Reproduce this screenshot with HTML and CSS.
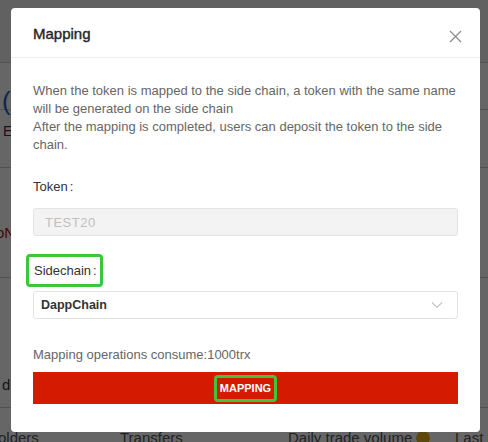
FILE: index.html
```html
<!DOCTYPE html>
<html>
<head>
<meta charset="utf-8">
<link rel="stylesheet" href="styles.css">
</head>
<body>
<div class="page">
  <div class="bg-row r1"></div>
  <div class="bg-row r2"><span class="bg-blue">(</span></div>
  <div class="bg-row r3"><span>E</span></div>
  <div class="bg-row r4"><span class="bg-red">oN</span></div>
  <div class="bg-row r5"><span>d</span></div>
  <div class="bg-tabs">
    <span class="t1">olders</span>
    <span class="t2">Transfers</span>
    <span class="t3">Daily trade volume <i class="coin"></i></span>
    <span class="t4">Last</span>
  </div>
</div>
<div class="overlay"></div>
<div class="modal">
  <div class="modal-head">
    <h2 class="modal-title">Mapping</h2>
    <svg class="close" width="13" height="13" viewBox="0 0 13 13"><path d="M1 1L12 12M12 1L1 12" stroke="#8c8c8c" stroke-width="1.3" fill="none"/></svg>
  </div>
  <div class="modal-body">
    <p class="desc">When the token is mapped to the side chain, a token with the same name will be generated on the side chain<br>After the mapping is completed, users can deposit the token to the side chain.</p>
    <div class="label">Token<span class="colon">:</span></div>
    <div class="input disabled">TEST20</div>
    <div class="label hl"><span class="hl-box">Sidechain<span class="colon">:</span></span></div>
    <div class="input select">
      <span class="sel-val">DappChain</span>
      <svg class="chev" width="12" height="8" viewBox="0 0 12 8"><path d="M1 1.5L6 6.5L11 1.5" stroke="#c4c4c4" stroke-width="1.2" fill="none"/></svg>
    </div>
    <div class="consume">Mapping operations consume:1000trx</div>
    <div class="btn"><span class="btn-text">MAPPING</span></div>
  </div>
</div>
</body>
</html>
```
FILE: styles.css
```css
html, body {
  margin: 0;
  padding: 0;
}
body {
  width: 488px;
  height: 442px;
  overflow: hidden;
  position: relative;
  font-family: "Liberation Sans", Arial, sans-serif;
  background: #fff;
}
.page {
  position: absolute;
  inset: 0;
  background: #fff;
}
.bg-row {
  position: absolute;
  left: 0;
  right: 0;
  border-bottom: 1px solid #ccc;
  font-size: 16px;
  color: #333;
}
.r1 { top: 0; height: 62px; background: #f3f3f3; }
.r2 { top: 62px; height: 48px; padding-top: 24px; box-sizing: border-box; }
.r3 { top: 110px; height: 58px; padding-top: 12px; box-sizing: border-box; }
.r4 { top: 168px; height: 110px; padding-top: 56px; box-sizing: border-box; }
.r5 { top: 278px; height: 130px; padding-top: 98px; box-sizing: border-box; }
.bg-blue { color: #2a5ad0; font-size: 26px; margin-left: 2px; }
.bg-red { color: #b01010; font-size: 15px; margin-left: -4px; }
.r3 span { margin-left: 3px; font-size: 14px; }
.r5 span { margin-left: 2px; font-size: 15px; }
.bg-tabs {
  position: absolute;
  left: 0;
  right: 0;
  top: 429px;
  font-size: 15px;
  color: #555;
}
.bg-tabs span { position: absolute; top: 0; white-space: nowrap; }
.t1 { left: -2px; }
.t2 { left: 120px; }
.t3 { left: 288px; }
.t4 { left: 455px; }
.coin {
  display: inline-block;
  width: 14px;
  height: 14px;
  border-radius: 50%;
  background: #e9b320;
  vertical-align: -2px;
}
.overlay {
  position: absolute;
  inset: 0;
  background: rgba(0, 0, 0, 0.6);
}
.modal {
  position: absolute;
  left: 11px;
  top: 8px;
  width: 469px;
  height: 424px;
  background: #fff;
  border-radius: 4px;
  box-sizing: border-box;
}
.modal-head {
  height: 49px;
  border-bottom: 1px solid #eeeeee;
  display: flex;
  align-items: center;
  justify-content: space-between;
  padding: 0 18px 0 22px;
}
.modal-title {
  margin: 0;
  font-size: 15px;
  font-weight: 400;
  -webkit-text-stroke: 0.4px #262626;
  color: #262626;
  padding-top: 1px;
}
.close { margin-top: 8px; }
.modal-body {
  padding: 24px 22px 0 22px;
}
.desc {
  margin: 0;
  font-size: 13px;
  line-height: 18px;
  color: #666;
}
.label {
  font-size: 13px;
  color: #333;
  margin-top: 24px;
  line-height: 18px;
}
.colon { margin-left: 2px; }
.input {
  margin-top: 12px;
  height: 28px;
  box-sizing: border-box;
  border: 1px solid #e3e3e3;
  border-radius: 3px;
  font-size: 13px;
  display: flex;
  align-items: center;
  padding: 0 11px;
}
.disabled {
  background: #f3f3f3;
  color: #c0c0c0;
  letter-spacing: 0.5px;
}
.label.hl { margin-top: 18px; }
.hl-box {
  display: inline-block;
  margin-left: -7px;
  padding: 6px 3px 6px 5px;
  border: 3px solid #3ec63a;
  border-radius: 4px;
  line-height: 15px;
}
.select {
  margin-top: 4px;
  padding: 0 14px 0 7px;
  justify-content: space-between;
}
.sel-val {
  font-size: 12.5px;
  font-weight: 700;
  color: #333;
}
.consume {
  margin-top: 27px;
  font-size: 13px;
  color: #666;
  line-height: 18px;
}
.btn {
  margin-top: 8px;
  height: 32px;
  background: #d41a00;
  display: flex;
  align-items: center;
  justify-content: center;
}
.btn-text {
  color: #fff;
  font-weight: 700;
  font-size: 11px;
  padding: 4px 3px;
  border: 3px solid #3ec63a;
  border-radius: 4px;
  line-height: 13px;
}
```
